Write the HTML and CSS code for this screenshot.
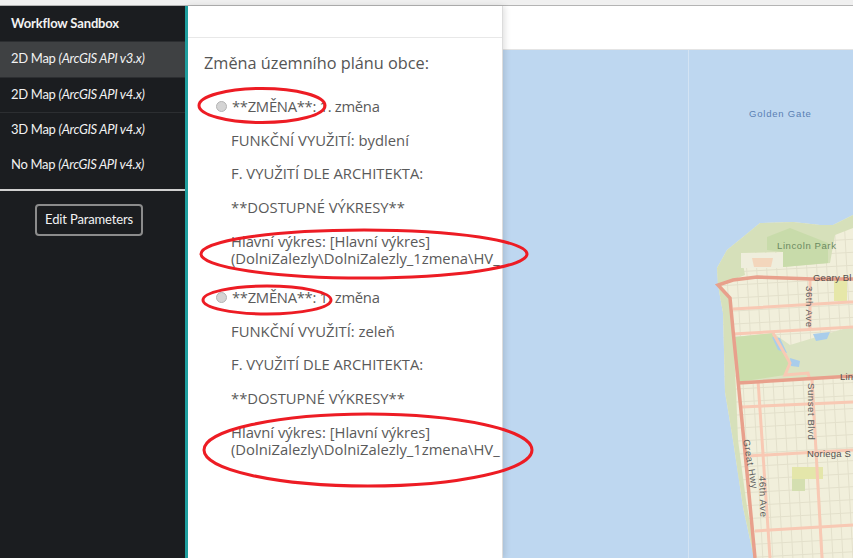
FILE: index.html
```html
<!DOCTYPE html>
<html lang="cs">
<head>
    <meta charset="UTF-8">
    <meta name="viewport" content="width=device-width, initial-scale=1.0">
    <title>Workflow Sandbox</title>
    <link rel="stylesheet" href="styles.css">
</head>
<body>
    <div class="browser-bar"></div>
    <div class="app">
        <!-- levy sloupec -->
        <nav class="sidebar">
            <div class="brand">Workflow Sandbox</div>
            <a class="nav-item active">2D Map <em>(ArcGIS API v3.x)</em></a>
            <a class="nav-item">2D Map <em>(ArcGIS API v4.x)</em></a>
            <a class="nav-item">3D Map <em>(ArcGIS API v4.x)</em></a>
            <a class="nav-item no-line">No Map <em>(ArcGIS API v4.x)</em></a>
            <div class="sidebar-actions">
                <button class="edit-btn">Edit Parameters</button>
            </div>
        </nav>

        <!-- panel s parametry -->
        <section class="panel">
            <div class="panel-head"></div>
            <div class="panel-body">
                <h2 class="panel-title">Změna územního plánu obce:</h2>
                <div class="option">
                    <label class="option-row"><span class="radio"></span>**ZMĚNA**: 1. změna</label>
                    <p>FUNKČNÍ VYUŽITÍ: bydlení</p>
                    <p>F. VYUŽITÍ DLE ARCHITEKTA:</p>
                    <p>**DOSTUPNÉ VÝKRESY**</p>
                    <p class="path">Hlavní výkres: [Hlavní výkres] (DolniZalezly\DolniZalezly_1zmena\HV_</p>
                </div>
                <div class="option">
                    <label class="option-row"><span class="radio"></span>**ZMĚNA**: 1. změna</label>
                    <p>FUNKČNÍ VYUŽITÍ: zeleň</p>
                    <p>F. VYUŽITÍ DLE ARCHITEKTA:</p>
                    <p>**DOSTUPNÉ VÝKRESY**</p>
                    <p class="path">Hlavní výkres: [Hlavní výkres] (DolniZalezly\DolniZalezly_1zmena\HV_</p>
                </div>
            </div>
        </section>

        <!-- mapa -->
        <main class="map-wrap">
            <div class="map-head"></div>
            <div class="map">
                <svg class="map-svg" viewBox="503 50 350 508" width="350" height="508">
                    <defs>
                        <pattern id="blocks" width="10" height="13" patternUnits="userSpaceOnUse" patternTransform="rotate(-3.2)">
                            <rect width="10" height="13" fill="#f1efdb"/>
                            <path d="M0.5 0V13M0 0.5H10" stroke="#e3e0cb" fill="none"/>
                        </pattern>
                    </defs>
                    <rect x="503" y="50" width="350" height="508" fill="#bed7f0"/>
                    <line x1="688.5" y1="50" x2="688.5" y2="558" stroke="#d3e3f3"/>
                    <!-- pevnina -->
                    <path d="M853 215L833 225 820 225 793 222 760 223 743 237 727 250 717 268 718 285 723 313 724 350 725 392 733 440 743 507 754 558H853Z" fill="url(#blocks)"/>
                    <!-- pobrezi a parky -->
                    <path d="M853 215L833 225 820 225 793 222 760 223 743 237 727 250 717 268 718 285 723 313 724 350 725 392 733 440 743 507 754 558H756L746 500 738 440 736 390 733 330 729 298 720 285 745 275 741 253 783 252 783 267 830 263 835 235 853 228Z" fill="#d6e0ba"/>
                    <path d="M767 237L790 228 828 243 828 263 783 267 783 252 767 250Z" fill="#c8dbaa"/>
                    <rect x="741" y="253" width="42" height="15" fill="#efeedd"/>
                    <path d="M752 258H773L771 267H754Z" fill="#f3d6bc"/>
                    <path d="M735 337L773 333 790 345 853 326V376L738 382Z" fill="#dbe3c2"/>
                    <path d="M735 337L773 333 790 363 785 375 738 382Z" fill="#cbdeac"/>
                    <path d="M772 337L780 338 787 353 778 350Z" fill="#a9cdeb"/>
                    <path d="M790 358L800 361 799 367 791 366Z" fill="#a9cdeb"/>
                    <path d="M813 334L830 332 827 339 816 341Z" fill="#a9cdeb"/>
                    <rect x="792" y="467" width="31" height="12" fill="#e4e6aa"/>
                    <rect x="792" y="479" width="13" height="12" fill="#d4dfb0"/>
                    <rect x="834" y="279" width="13" height="22" fill="#e6e7a8"/>
                    <!-- ulice -->
                    <path class="road" d="M733 309L850 302 853 302"/>
                    <path class="road" d="M733 334L853 327"/>
                    <path class="road" d="M773 333L790 363 785 375 808 373 810 380"/>
                    <path class="road" d="M810 280V330"/>
                    <path class="road" d="M812 380L822 558"/>
                    <path class="road" d="M758 380L770 558"/>
                    <path class="road" d="M742 407L853 402"/>
                    <path class="road" d="M748 456L853 450"/>
                    <path class="road" d="M755 531L853 525"/>
                    <path class="road wide" d="M853 279L813 279 757 277 733 280 718 285 730 298 733 330 738 380 747 473 755 558"/>
                    <path class="road wide" d="M738 383L853 376"/>
                    <!-- popisky -->
                    <text class="map-label water" x="749" y="117">Golden Gate</text>
                    <text class="map-label park" x="777" y="249">Lincoln Park</text>
                    <text class="map-label dark" x="813" y="281">Geary Bl</text>
                    <text class="map-label dark" x="840" y="380">Lin</text>
                    <text class="map-label dark" x="807" y="457">Noriega S</text>
                    <text class="map-label" transform="translate(806 286) rotate(90)">36th Ave</text>
                    <text class="map-label" transform="translate(808 383) rotate(90)">Sunset Blvd</text>
                    <text class="map-label" transform="translate(743 440) rotate(80)">Great Hwy</text>
                    <text class="map-label" transform="translate(759 476) rotate(88)">46th Ave</text>
                </svg>
            </div>
        </main>

        <!-- cervene obtazeni ze screenshotu -->
        <svg class="marks" viewBox="0 0 853 558" width="853" height="558">
            <ellipse cx="262" cy="105.5" rx="63" ry="17"/>
            <ellipse cx="364" cy="254" rx="163" ry="24"/>
            <ellipse cx="267" cy="300" rx="64" ry="14"/>
            <ellipse cx="368" cy="450" rx="164" ry="36"/>
        </svg>
    </div>
</body>
</html>
```

FILE: styles.css
```css
* {
    box-sizing: border-box;
}

html, body {
    margin: 0;
    height: 100%;
    overflow: hidden;
}

body {
    font-family: Lato, "Liberation Sans", sans-serif;
    font-size: 14px;
    background-color: #fff;
}

.browser-bar {
    height: 6px;
    background-color: #f0f0f0;
    border-bottom: 1px solid #b4b4b4;
}

.app {
    position: relative;
    display: flex;
    height: 552px;
}

.sidebar {
    width: 185px;
    flex-shrink: 0;
    background-color: #1b1d20;
    color: #f2f2f2;
}

.brand {
    height: 35px;
    padding: 9px 11px 0;
    font-weight: bold;
    font-size: 13px;
    letter-spacing: -0.15px;
}

.nav-item {
    display: block;
    height: 35.5px;
    padding-top: 8px;
    padding-left: 11px;
    font-size: 13px;
    letter-spacing: -0.3px;
    border-top: 1px solid #2c2e31;
}

.nav-item.active {
    background-color: #3f4143;
}

.nav-item.no-line {
    border-top: 0;
    height: 41.5px;
    padding-top: 8px;
}

.sidebar-actions {
    padding: 13px 0 0 35px;
    border-top: 2px solid #d0d0d0;
}

.edit-btn {
    width: 108px;
    height: 32px;
    padding: 0 0 2px;
    font-family: inherit;
    font-size: 13px;
    letter-spacing: -0.15px;
    color: #f2f2f2;
    background-color: transparent;
    border: 2px solid #8c8c8c;
    border-radius: 4px;
}

.panel {
    position: relative;
    z-index: 1;
    width: 318px;
    flex-shrink: 0;
    border-left: 3px solid #1f9e9e;
    border-right: 1px solid #dcdcdc;
    background-color: #fff;
    color: #5a5a5a;
    box-shadow: 2px 0 6px rgba(0,0,0,0.12);
    overflow: hidden;
}

.panel-head {
    height: 32px;
    border-bottom: 1px solid #e8e8e8;
}

.panel-body {
    padding: 15px 0 0 16px;
}

.panel-title {
    margin: 0 0 23px;
    font-family: "Open Sans", "Liberation Sans", sans-serif;
    font-size: 16.3px;
    font-weight: normal;
    line-height: 20px;
    color: #555;
}

.option {
    font-family: "Open Sans", "Liberation Sans", sans-serif;
    font-size: 14.8px;
}

.option p {
    margin: 0 0 13.5px;
    padding-left: 27px;
    line-height: 20px;
    white-space: nowrap;
}

.option-row {
    display: flex;
    align-items: center;
    height: 20px;
    margin-bottom: 13.5px;
    letter-spacing: -0.3px;
}

.radio {
    width: 11px;
    height: 11px;
    margin: 0 5px 0 12px;
    border-radius: 50%;
    border: 1px solid #b4b4b4;
    background-color: #d4d4d4;
}

.option p.path {
    width: 300px;
    padding-top: 2.5px;
    margin-bottom: 19.5px;
    line-height: 17.5px;
    white-space: normal;
}

.map-wrap {
    flex: 1;
    display: flex;
    flex-direction: column;
    min-width: 0;
}

.map-head {
    height: 44px;
    flex-shrink: 0;
    background-color: #fff;
    border-bottom: 1px solid #e4e4e4;
}

.map {
    flex: 1;
    overflow: hidden;
}

.map-svg {
    display: block;
}

.road {
    fill: none;
    stroke: #f8c9b4;
    stroke-width: 3;
}

.road.wide {
    stroke: #e8a08c;
    stroke-width: 3.5;
}

.map-label {
    font-family: "Liberation Sans", Arial, sans-serif;
    font-size: 9.5px;
    letter-spacing: 0.6px;
    fill: #5e5e5e;
}

.map-label.water {
    fill: #5a7fb3;
    letter-spacing: 0.8px;
}

.map-label.park {
    fill: #6b8a5f;
}

.map-label.dark {
    font-size: 9.5px;
    letter-spacing: 0.2px;
    fill: #55504e;
}

.marks {
    position: absolute;
    z-index: 2;
    left: 0;
    top: -6px;
    pointer-events: none;
}

.marks ellipse {
    fill: none;
    stroke: #ed1c24;
    stroke-width: 3;
}
```
